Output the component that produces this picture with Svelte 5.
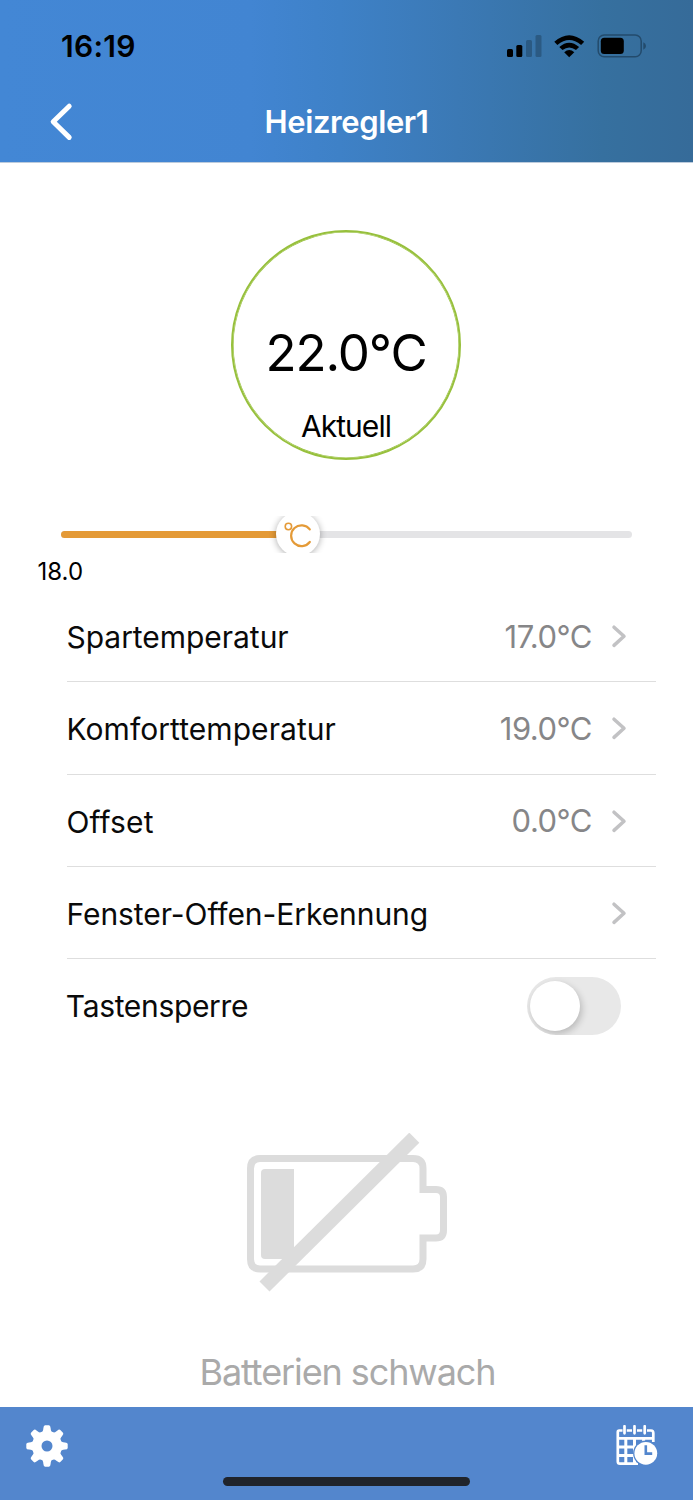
<script>
  const rows = [
    { label: 'Spartemperatur', value: '17.0°C', track: -0.04 },
    { label: 'Komforttemperatur', value: '19.0°C', track: 0.06 },
    { label: 'Offset', value: '0.0°C', track: 0.1 },
    { label: 'Fenster-Offen-Erkennung', value: '', track: -0.06 }
  ];
  const teeth = [0, 45, 90, 135, 180, 225, 270, 315];
  let locked = $state(false);
  let level = $state(41.4);
</script>

<div class="screen">
  <header>
    <div class="status">
      <span class="time">16:19</span>
      <svg class="indicators" width="140" height="26" viewBox="0 0 140 26">
        <rect x="1" y="15" width="6" height="8" rx="1.5" />
        <rect x="10.3" y="11" width="6" height="12" rx="1.5" />
        <g fill="#2b5a83">
          <rect x="20" y="6" width="6" height="17" rx="1.5" />
          <rect x="29.5" y="1" width="6" height="22" rx="1.5" />
        </g>
        <path d="M48.3 7.7Q63.2-5.4 78.2 7.7L75.1 10.9Q63.2.9 51.4 10.9Z" />
        <path d="M53.3 12.9Q63.2 4.4 73.1 12.9L70 16.1Q63.2 10.7 56.5 16.1Z" />
        <path d="M58.2 18.2Q63.2 14 68.3 18.2L63.2 23.3Z" />
        <rect x="92.2" y="1" width="43" height="21.7" rx="6" fill="none" stroke="#234b6c" stroke-width="1.5" />
        <rect x="94.8" y="3.7" width="23" height="16.3" rx="3.5" />
        <path d="M137.3 8.2Q140 9.5 140 12Q140 14.5 137.3 15.8Z" fill="#234b6c" />
      </svg>
    </div>
    <div class="nav">
      <svg width="24" height="40" viewBox="0 0 24 40">
        <path d="M20.2 4.2L4.2 19.7L20.2 35.4" fill="none" stroke="#fff" stroke-width="5" stroke-linecap="round" stroke-linejoin="round" />
      </svg>
      <h1>Heizregler1</h1>
    </div>
  </header>

  <main>
    <div class="dial">
      <span class="temp">22.0°C</span>
      <span class="caption">Aktuell</span>
    </div>

    <div class="slider">
      <div class="track">
        <div class="fill" style="width: {level}%"></div>
      </div>
      <div class="thumb" style="left: calc({level}% + 39px)">
        <svg width="30" height="28" viewBox="0 0 30 28" fill="none" stroke="#e49a37">
          <circle cx="5.4" cy="6.5" r="3.2" stroke-width="1.6" />
          <path d="M26.8 9.4A10.4 10.4 0 1 0 26.8 22" stroke-width="2.2" stroke-linecap="round" />
        </svg>
      </div>
    </div>
    <div class="setpoint">18.0</div>

    <div class="list">
      {#each rows as row}
        <div class="row">
          <span class="label" style="letter-spacing: {row.track}px">{row.label}</span>
          <span class="value">{row.value}</span>
          <svg width="16" height="24" viewBox="0 0 16 24">
            <path d="M3 3.2L13 12.3L3 21.4" fill="none" stroke="#c2c2c4" stroke-width="3.5" stroke-linecap="round" stroke-linejoin="round" />
          </svg>
        </div>
      {/each}
      <div class="row last">
        <span class="label key">Tastensperre</span>
        <button class="switch" class:on={locked} aria-label="Tastensperre" onclick={() => (locked = !locked)}><i></i></button>
      </div>
    </div>

    <div class="battery">
      <svg width="202" height="160" viewBox="0 0 202 160">
        <g fill="none" stroke="#dcdcdc">
          <path d="M13 25.5H166Q176 25.5 176 35.5V56.5H189Q196.5 56.5 196.5 64V97Q196.5 105 189 105H176V126Q176 136 166 136H13Q3.5 136 3.5 126V35.5Q3.5 25.5 13 25.5Z" stroke-width="7" />
          <path d="M17.5 153.5L167.3 4.7" stroke-width="14.2" />
        </g>
        <path d="M18 36H47V126H18Q14 126 14 122V40Q14 36 18 36Z" fill="#dcdcdc" />
      </svg>
      <p>Batterien schwach</p>
    </div>
  </main>

  <footer>
    <svg width="42" height="42" viewBox="-21 -21 42 42">
      <g fill="#fff">
        {#each teeth as angle}
          <path d="M-6-13Q-3.8-14-3.6-18Q-3.4-20.7-1.9-20.7H1.9Q3.4-20.7 3.6-18Q3.8-14 6-13Z" transform="rotate({angle})" />
        {/each}
        <circle r="15" />
      </g>
      <circle r="5.5" fill="#5386cd" />
    </svg>
    <svg width="42" height="42" viewBox="0 0 42 42" fill="none" stroke="#fff">
      <path d="M6.5 5.5H3.2Q1.8 5.5 1.8 7V36.5Q1.8 38.7 4 38.7H22M10.8 5.5H16M21 5.5H26.2M31 5.5H35Q37.3 5.5 37.3 8V17M1.8 13.3H37" stroke-width="2.7" />
      <path d="M8.5 1.2V8.3M18.5 1.2V8.3M28.7 1.2V8.3" stroke-width="2.7" stroke-linecap="round" />
      <path d="M2 22H23M2 30.5H19M9.8 14V38M18.5 14V38M27.7 14V18" stroke-width="3" />
      <circle cx="29.8" cy="28.3" r="12.7" fill="#5386cd" stroke="none" />
      <circle cx="29.8" cy="28.3" r="11.4" fill="#fff" stroke="none" />
      <path d="M29.8 20.3V28.6H36.2" stroke="#5386cd" stroke-width="2.6" />
    </svg>
    <div class="home"></div>
  </footer>
</div>

<style>
  :global(body) { margin: 0; background: #fff; }
  .screen {
    display: flex;
    flex-direction: column;
    width: 693px;
    height: 1500px;
    box-sizing: border-box;
    background: #fff;
    color: #000;
    font-family: Inter, "Liberation Sans", sans-serif;
    overflow: hidden;
  }
  header {
    flex: none;
    height: 163px;
    box-sizing: border-box;
    border-bottom: 1px solid #bccbdc;
    background: linear-gradient(90deg, #4387d5 0%, #4285d2 36%, #3e81c7 49%, #3b79b5 66%, #36709f 87%, #366b99 100%);
  }
  .status {
    display: flex;
    justify-content: space-between;
    height: 82px;
    padding: 0 47px 0 61px;
  }
  .time { font-size: 30px; font-weight: 600; line-height: 93px; letter-spacing: 0.3px; }
  .indicators { margin-top: 34px; }
  .nav {
    display: grid;
    grid-template-columns: 48px 1fr 48px;
    align-items: center;
    height: 80px;
    padding: 0 49px;
  }
  h1 { margin: 0; color: #fff; font-size: 31px; font-weight: 600; line-height: 80px; text-align: center; letter-spacing: -0.4px; }
  main { flex: 1; display: flex; flex-direction: column; }
  .dial {
    flex: none;
    display: flex;
    flex-direction: column;
    align-items: center;
    width: 230px;
    height: 230px;
    box-sizing: border-box;
    margin: 67px auto 0 231px;
    border: 2px solid #97c03c;
    border-radius: 50%;
    box-shadow: inset 0 0 0 0.6px #97c03c;
  }
  .temp { margin-top: 90px; font-size: 51px; line-height: 62px; letter-spacing: -1.1px; }
  .caption { margin-top: 24px; font-size: 30px; line-height: 36px; letter-spacing: -0.95px; }
  .slider {
    position: relative;
    height: 37px;
    margin-top: 56px;
    overflow: hidden;
    display: flex;
    align-items: center;
    padding: 0 61px;
  }
  .track { flex: 1; height: 7px; border-radius: 4px; background: #e4e4e6; overflow: hidden; }
  .fill { height: 100%; background: #e49a37; }
  .thumb {
    position: absolute;
    top: -4px;
    left: 0;
    margin-left: -50px;
    display: flex;
    align-items: center;
    justify-content: center;
    width: 44px;
    height: 44px;
    border-radius: 50%;
    background: #fff;
    box-shadow: 0 1px 7px #0005;
  }
  .setpoint { padding-left: 37.5px; margin-top: 4px; font-size: 24px; line-height: 30px; }
  .list { margin: 3px 37px 0 66.5px; }
  .row {
    display: flex;
    align-items: center;
    height: 92.3px;
    box-sizing: border-box;
    padding: 1px 29px 0 0;
    border-bottom: 1px solid #dedede;
  }
  .label { flex: 1; padding-top: 1.6px; font-size: 30px; color: #0a0a0a; }
  .value { margin-right: 19px; font-size: 31px; letter-spacing: -0.5px; color: #868688; }
  .last { border: 0; padding: 2px 35px 0 0; }
  .key { padding-top: 0; letter-spacing: -0.33px; margin-left: -0.7px; }
  .switch {
    width: 94px;
    height: 58px;
    padding: 4px 3px;
    border: 0;
    border-radius: 29px;
    background: #e8e8e8;
    overflow: hidden;
  }
  .switch i { display: block; width: 50px; height: 50px; border-radius: 50%; background: #fff; box-shadow: 2px 3px 7px #0003; }
  .switch.on { background: #97c03c; }
  .switch.on i { margin-left: 38px; }
  .battery { display: flex; flex-direction: column; align-items: center; margin-top: 82px; padding-left: 2px; }
  p { margin: 56px 0 0; font-size: 36px; line-height: 46px; color: #aaa; letter-spacing: -1.1px; }
  footer {
    position: relative;
    flex: none;
    display: flex;
    justify-content: space-between;
    height: 93px;
    box-sizing: border-box;
    padding: 18px 35px 0 25.5px;
    background: #5386cd;
  }
  .home { position: absolute; left: 223px; bottom: 14px; width: 247px; height: 9px; border-radius: 5px; background: #20242b; }
</style>
